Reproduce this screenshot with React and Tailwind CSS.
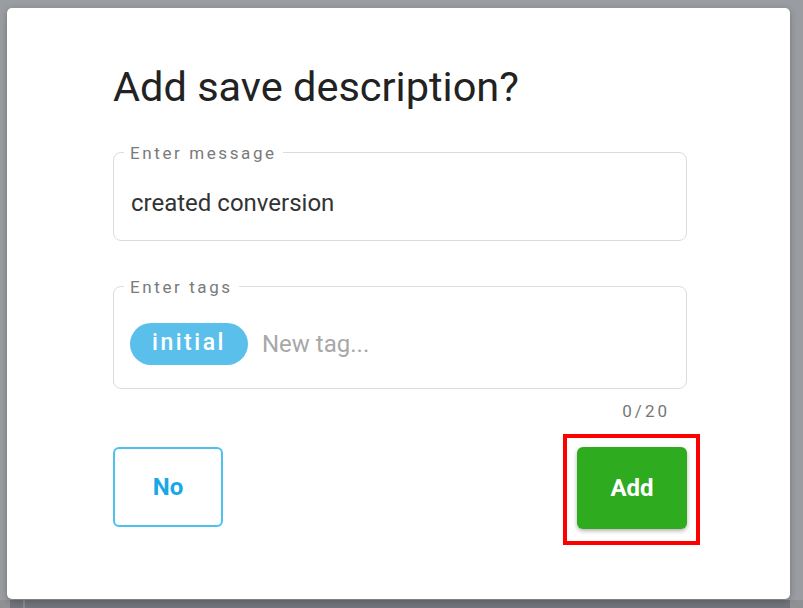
export default function App() {
  return (
    <div className="w-[803px] h-[608px] flex flex-col bg-[#999ca0] overflow-hidden relative" style={{ fontFamily: "Roboto, 'Liberation Sans', sans-serif" }}>
      <div className="flex-1 pt-[8px] pl-[7px] pr-[13px] flex">
        <div className="w-[783px] h-[591px] bg-white rounded-[5px] shadow-[0_2px_6px_rgba(0,0,0,0.25)] pl-[106px] pr-[103px] pt-[53px] flex flex-col relative z-10">
          <h1 className="text-[41.5px] leading-[52px] text-[#222] font-normal">Add save description?</h1>

          <div className="mt-[39px] h-[89px] border border-[#dcdcdc] rounded-[8px] relative flex items-center pl-[17px]">
            <span className="absolute -top-[10px] left-[10px] bg-white px-[6px] text-[17px] leading-[20px] tracking-[2.6px] text-[#7a7a7a]">Enter message</span>
            <span className="text-[24px] text-[#333] pt-[13px]">created conversion</span>
          </div>

          <div className="mt-[45px] h-[103px] border border-[#dcdcdc] rounded-[8px] relative flex items-center pl-[16px] pt-[12px]">
            <span className="absolute -top-[10px] left-[10px] bg-white px-[6px] text-[17px] leading-[20px] tracking-[2.6px] text-[#7a7a7a]">Enter tags</span>
            <span className="h-[42px] w-[118px] rounded-full bg-[#5bbfec] text-white text-[23px] font-medium tracking-[2.5px] flex items-center justify-center">initial</span>
            <span className="ml-[14px] text-[24px] text-[#a8a8a8]">New tag...</span>
          </div>

          <div className="flex justify-end pr-[17px] mt-[11px] text-[17px] leading-[22px] tracking-[3px] text-[#777]">0/20</div>

          <div className="flex justify-between items-start mt-[25px]">
            <button className="w-[110px] h-[80px] border-2 border-[#4cc0ef] rounded-[6px] text-[#1aa7e6] text-[24px] font-bold">No</button>
            <div className="border-[4px] border-[#ff0000] -mt-[13px] -mr-[13px] pt-[9px] pl-[10px] pr-[9px] pb-[12px]">
              <button className="w-[110px] h-[82px] bg-[#2eab1f] rounded-[6px] text-white text-[24px] font-bold shadow-[0_2px_4px_rgba(0,0,0,0.3)]">Add</button>
            </div>
          </div>
        </div>
      </div>
      <div className="absolute left-0 top-[600px] w-[803px] h-[8px] bg-[#72747b] flex">
        <div className="w-[10px] bg-[#8e9094]"></div>
        <div className="w-[13px]"></div>
        <div className="w-[2px] bg-[#888a8e]"></div>
        <div className="flex-1"></div>
        <div className="w-[13px] bg-[#8e9094]"></div>
      </div>
    </div>
  );
}
